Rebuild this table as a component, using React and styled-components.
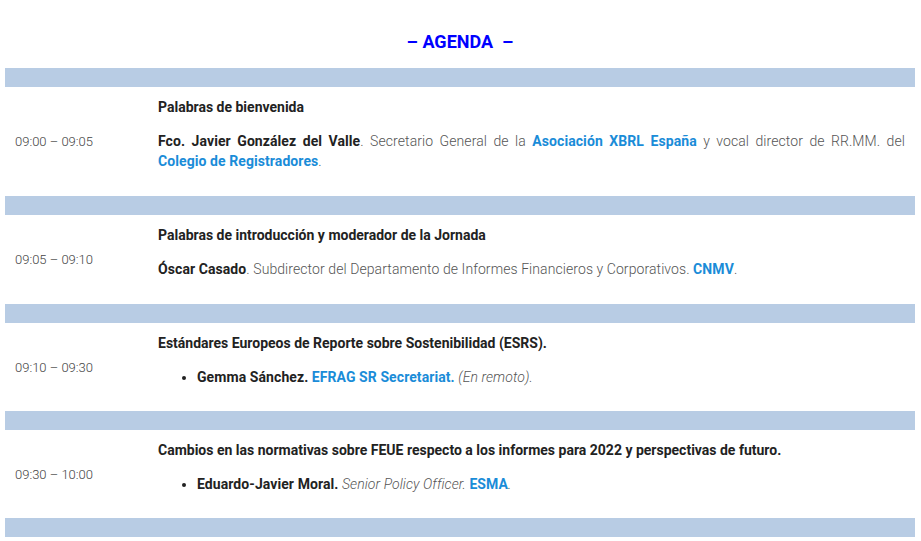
import React from "react";
import styled, { createGlobalStyle } from "styled-components";

const GlobalStyle = createGlobalStyle`
  body {
    margin: 0;
    background: #fff;
    font-family: Roboto, "Liberation Sans", sans-serif;
  }
`;

const Page = styled.div`
  padding: 0 6px 0 5px;
`;

const Heading = styled.h2`
  margin: 0;
  height: 68px;
  display: flex;
  align-items: center;
  justify-content: center;
  padding-top: 14px;
  box-sizing: border-box;
  color: #0000ff;
  font-size: 18px;
  font-weight: 700;
  white-space: pre;
`;

const Bar = styled.div`
  height: 19px;
  background: #b8cce4;
`;

const Row = styled.div`
  display: grid;
  grid-template-columns: 143px 1fr;
`;

const Time = styled.div`
  display: flex;
  align-items: center;
  padding: 0 10px;
  font-size: 13px;
  font-weight: 300;
  color: #444;
`;

const Content = styled.div`
  padding: ${({ last }) => (last ? "10px 10px 10px" : "10px 10px 11px")};
  font-size: 14px;
  line-height: 20px;
  letter-spacing: 0.08px;
  color: #555;
  font-weight: 300;
`;

const Para = styled.p`
  margin: 0 0 14px;
  text-align: ${({ justify }) => (justify ? "justify" : "left")};
`;

const Title = styled(Para)`
  font-weight: 700;
  color: #222;
  letter-spacing: 0;
`;

const Name = styled.strong`
  font-weight: 700;
  color: #222;
`;

const Org = styled.a`
  color: #1a8cd8;
  font-weight: 700;
  text-decoration: none;
`;

const Note = styled.em`
  font-style: italic;
  color: #555;
`;

const Speakers = styled.ul`
  margin: 0 0 14px;
  padding-left: 39px;
  color: #222;
`;

const sessions = [
  {
    time: "09:00 – 09:05",
    title: "Palabras de bienvenida",
    body: (
      <Para justify>
        <Name>Fco. Javier González del Valle</Name>. Secretario General de la{" "}
        <Org href="#">Asociación XBRL España</Org> y vocal director de RR.MM.
        del <Org href="#">Colegio de Registradores</Org>.
      </Para>
    ),
  },
  {
    time: "09:05 – 09:10",
    title: "Palabras de introducción y moderador de la Jornada",
    body: (
      <Para>
        <Name>Óscar Casado</Name>. Subdirector del Departamento de Informes
        Financieros y Corporativos. <Org href="#">CNMV</Org>.
      </Para>
    ),
  },
  {
    time: "09:10 – 09:30",
    title: "Estándares Europeos de Reporte sobre Sostenibilidad (ESRS).",
    body: (
      <Speakers>
        <li>
          <Name>Gemma Sánchez.</Name> <Org href="#">EFRAG SR Secretariat.</Org>{" "}
          <Note>(En remoto).</Note>
        </li>
      </Speakers>
    ),
  },
  {
    time: "09:30 – 10:00",
    title:
      "Cambios en las normativas sobre FEUE respecto a los informes para 2022 y perspectivas de futuro.",
    body: (
      <Speakers>
        <li>
          <Name>Eduardo-Javier Moral.</Name> <Note>Senior Policy Officer</Note>
          <Note as="span">. </Note>
          <Org href="#">ESMA</Org>
          <Note as="span">.</Note>
        </li>
      </Speakers>
    ),
  },
];

const App = () => (
  <>
    <GlobalStyle />
    <Page>
      <Heading>{"– AGENDA  –"}</Heading>
      {sessions.map((s, i) => (
        <React.Fragment key={s.time}>
          <Bar />
          <Row>
            <Time>{s.time}</Time>
            <Content last={i >= 2}>
              <Title>{s.title}</Title>
              {s.body}
            </Content>
          </Row>
        </React.Fragment>
      ))}
      <Bar />
    </Page>
  </>
);

export default App;
